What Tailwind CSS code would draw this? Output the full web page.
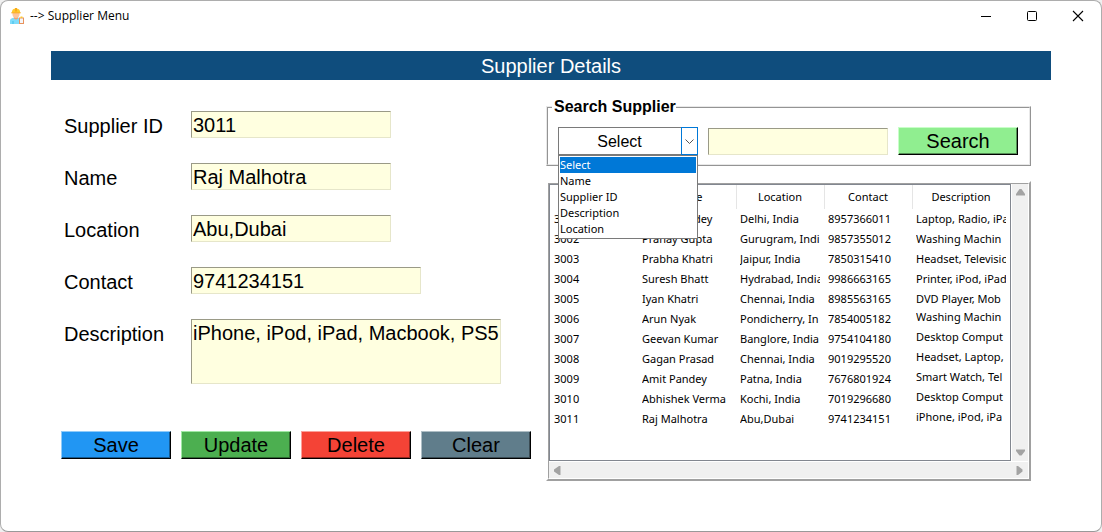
<!DOCTYPE html>
<html lang="en">
<head>
<meta charset="utf-8">
<meta name="viewport" content="width=device-width, initial-scale=1">
<title>Supplier Menu</title>
<script src="https://cdn.jsdelivr.net/npm/@tailwindcss/browser@4"></script>
</head>
<body class="bg-[#f0f0f0] text-black font-['Liberation_Sans',Arial,sans-serif]">
<div class="min-h-screen flex flex-col bg-white border border-[#adadad] border-b-[#999] rounded-lg">
  <header class="flex items-center h-[30px] pl-2">
    <svg class="size-4 shrink-0" viewBox="0 0 16 16" aria-hidden="true">
      <path d="M1 16v-3.500q0-2 2-2.300l2-.7h4l2 .7q1.500.3 1.500 2.300v3.500z" fill="#7fdcfb"/>
      <path d="M3.500 13h1v3h-1z" fill="#45bde8"/>
      <path d="M5 8h4v2.500q-2 2-4 0z" fill="#f0a070"/>
      <path d="M3.500 4.500h7v2.500q-.6 3-3.500 3t-3.500-3z" fill="#fcc59a"/>
      <path d="M2.800 4.800q0-4.300 4.200-4.300t4.200 4.300z" fill="#fdc92e"/>
      <path d="M6 0h2v3.500h-2z" fill="#f9a91c"/>
      <path d="M2.300 4.300h9.400v1h-9.400z" fill="#f9a91c"/>
      <path d="M10 9.500h5v6.500h-5z" fill="#e8935e"/>
      <path d="M11 10.500h3v4.500h-3z" fill="#f3f6fa"/>
      <path d="M11.500 8.500h2v1.500h-2z" fill="#fdc92e"/>
    </svg>
    <h1 class="grow ml-[5px] font-['Open_Sans',sans-serif] text-[12px] leading-4">--&gt; Supplier Menu</h1>
    <button type="button" aria-label="Minimize" class="w-[46px] h-full flex items-center justify-center">
      <svg class="size-3" viewBox="0 0 12 12" fill="none" stroke="#000"><path d="M1 6.500h10"/></svg>
    </button>
    <button type="button" aria-label="Maximize" class="w-[46px] h-full flex items-center justify-center">
      <svg class="size-3" viewBox="0 0 12 12" fill="none" stroke="#000"><rect x="1.500" y="1.500" width="9" height="9" rx="1"/></svg>
    </button>
    <button type="button" aria-label="Close" class="w-[46px] h-full flex items-center justify-center">
      <svg class="size-3" viewBox="0 0 12 12" fill="none" stroke="#000" stroke-width="1.100"><path d="M1 1l10 10M11 1L1 11"/></svg>
    </button>
  </header>

  <main class="px-[50px] pt-5 pb-12">
    <h2 class="h-[29px] bg-[#0f4d7d] text-white text-center text-[20px] leading-[30px]">Supplier Details</h2>
    <div class="flex items-start">
      <form class="w-[495px] shrink-0 pl-[10px] pt-[31px]">
        <div class="flex flex-col gap-[23px] pl-[3px] text-[20px]">
          <div class="flex items-start">
            <label for="sid" class="w-[127px] pt-[2px] leading-[27px]">Supplier ID</label>
            <input id="sid" value="3011" class="w-[200px] h-[27px] px-px bg-[#ffffe0] border border-t-[#9a9a87] border-l-[#9a9a87] border-b-[#e6e6ca] border-r-[#e6e6ca] outline-none">
          </div>
          <div class="flex items-start">
            <label for="name" class="w-[127px] pt-[2px] leading-[27px]">Name</label>
            <input id="name" value="Raj Malhotra" class="w-[200px] h-[27px] px-px bg-[#ffffe0] border border-t-[#9a9a87] border-l-[#9a9a87] border-b-[#e6e6ca] border-r-[#e6e6ca] outline-none">
          </div>
          <div class="flex items-start">
            <label for="loc" class="w-[127px] pt-[2px] leading-[27px]">Location</label>
            <input id="loc" value="Abu,Dubai" class="w-[200px] h-[27px] px-px bg-[#ffffe0] border border-t-[#9a9a87] border-l-[#9a9a87] border-b-[#e6e6ca] border-r-[#e6e6ca] outline-none">
          </div>
          <div class="flex items-start">
            <label for="contact" class="w-[127px] pt-[2px] leading-[27px]">Contact</label>
            <input id="contact" value="9741234151" class="w-[230px] h-[27px] px-px bg-[#ffffe0] border border-t-[#9a9a87] border-l-[#9a9a87] border-b-[#e6e6ca] border-r-[#e6e6ca] outline-none">
          </div>
          <div class="flex items-start">
            <label for="desc" class="w-[127px] pt-[2px] leading-[27px]">Description</label>
            <textarea id="desc" class="w-[310px] h-[65px] pl-px leading-[27px] resize-none overflow-hidden bg-[#ffffe0] border border-t-[#9a9a87] border-l-[#9a9a87] border-b-[#e6e6ca] border-r-[#e6e6ca] outline-none">iPhone, iPod, iPad, Macbook, PS5</textarea>
          </div>
        </div>
        <div class="flex gap-[10px] mt-[47px] text-[20px] leading-[26px]">
          <button type="button" class="w-[110px] h-[28px] bg-[#2196f3] border border-t-[#90cbf9] border-l-[#90cbf9] border-b-black border-r-black shadow-[inset_-1px_-1px_0_#145a92]">Save</button>
          <button type="button" class="w-[110px] h-[28px] bg-[#4caf50] border border-t-[#a0e8a4] border-l-[#a0e8a4] border-b-black border-r-black shadow-[inset_-1px_-1px_0_#2e6930]">Update</button>
          <button type="button" class="w-[110px] h-[28px] bg-[#f44336] border border-t-[#faa19b] border-l-[#faa19b] border-b-black border-r-black shadow-[inset_-1px_-1px_0_#922820]">Delete</button>
          <button type="button" class="w-[110px] h-[28px] bg-[#607d8b] border border-t-[#afbec5] border-l-[#afbec5] border-b-black border-r-black shadow-[inset_-1px_-1px_0_#3a4b53]">Clear</button>
        </div>
      </form>

      <section class="grow min-w-0 pt-[18px] pr-5">
        <fieldset class="min-w-0 border-2 [border-style:ridge] border-[#e8e8e8] px-1 pb-[9px]">
          <legend class="pl-[2px] text-[16px] leading-[18px] font-bold">Search Supplier</legend>
          <div class="flex items-center gap-[10px] pt-[11px] pl-[6px] pr-[7px]">
            <div class="relative w-[140px] shrink-0">
              <select aria-label="Search by" class="block appearance-none w-full h-[28px] pt-px pr-[17px] bg-white border border-[#7a7a7a] text-[16px] text-center outline-none">
                <option>Select</option>
                <option>Name</option>
                <option>Supplier ID</option>
                <option>Description</option>
                <option>Location</option>
              </select>
              <span class="absolute right-0 inset-y-0 w-[17px] flex items-center justify-center bg-white border border-[#0078d7] pointer-events-none">
                <svg class="w-[9px] h-[9px]" viewBox="0 0 9 9" fill="none" stroke="#555"><path d="M.5 2.500l4 4 4-4"/></svg>
              </span>
              <ul role="listbox" aria-label="Search options" class="absolute z-10 top-full inset-x-0 p-px bg-white border border-[#7a7a7a] font-['Noto_Sans',sans-serif] text-[11px] leading-4">
                <li role="option" aria-selected="true" class="bg-[#0078d7] text-white">Select</li>
                <li role="option">Name</li>
                <li role="option">Supplier ID</li>
                <li role="option">Description</li>
                <li role="option">Location</li>
              </ul>
            </div>
            <input aria-label="Search text" class="grow w-0 min-w-0 h-[27px] px-px text-[20px] bg-[#ffffe0] border border-t-[#9a9a87] border-l-[#9a9a87] border-b-[#e6e6ca] border-r-[#e6e6ca] outline-none">
            <button type="button" class="w-[120px] shrink-0 h-[28px] text-[20px] leading-[26px] bg-[#90ee90] border border-t-[#c8ffc8] border-l-[#c8ffc8] border-b-black border-r-black shadow-[inset_-1px_-1px_0_#568f56]">Search</button>
          </div>
        </fieldset>

        <div class="mt-[15px] border-2 border-t-white border-l-white border-b-[#a0a0a0] border-r-[#a0a0a0]">
        <div class="border border-t-[#a0a0a0] border-l-[#a0a0a0] border-b-white border-r-white grid grid-cols-[1fr_17px] grid-rows-[auto_17px] bg-[#f0f0f0]">
          <div class="min-w-0 h-[277px] overflow-hidden bg-white border border-[#828790]">
            <table class="w-full table-fixed border-collapse font-['Noto_Sans',sans-serif] text-[11px] leading-5 whitespace-nowrap">
              <colgroup><col class="w-[88px]"><col class="w-[98px]"><col class="w-[88px]"><col class="w-[88px]"><col class="w-[98px]"></colgroup>
              <thead>
                <tr class="h-[24px] *:font-normal *:p-0 *:border-r *:border-[#e5e5e5]">
                  <th>Supplier ID</th><th>Name</th><th>Location</th><th>Contact</th><th>Description</th>
                </tr>
              </thead>
              <tbody class="[&_td]:h-5 [&_td]:p-0 [&_td]:px-1 [&_td]:align-top [&_div]:overflow-hidden">
                <tr><td><div>3001</div></td><td><div>Rahul Pandey</div></td><td><div>Delhi, India</div></td><td><div>8957366011</div></td><td><div>Laptop, Radio, iPad</div></td></tr>
                <tr><td><div>3002</div></td><td><div>Pranay Gupta</div></td><td><div>Gurugram, Indi</div></td><td><div>9857355012</div></td><td><div>Washing Machin</div></td></tr>
                <tr><td><div>3003</div></td><td><div>Prabha Khatri</div></td><td><div>Jaipur, India</div></td><td><div>7850315410</div></td><td><div>Headset, Television</div></td></tr>
                <tr><td><div>3004</div></td><td><div>Suresh Bhatt</div></td><td><div>Hydrabad, India</div></td><td><div>9986663165</div></td><td><div>Printer, iPod, iPad</div></td></tr>
                <tr><td><div>3005</div></td><td><div>Iyan Khatri</div></td><td><div>Chennai, India</div></td><td><div>8985563165</div></td><td><div>DVD Player, Mob</div></td></tr>
                <tr><td><div>3006</div></td><td><div>Arun Nyak</div></td><td><div>Pondicherry, In</div></td><td><div>7854005182</div></td><td class="leading-4"><div>Washing Machin</div></td></tr>
                <tr><td><div>3007</div></td><td><div>Geevan Kumar</div></td><td><div>Banglore, India</div></td><td><div>9754104180</div></td><td class="leading-4"><div>Desktop Comput</div></td></tr>
                <tr><td><div>3008</div></td><td><div>Gagan Prasad</div></td><td><div>Chennai, India</div></td><td><div>9019295520</div></td><td class="leading-4"><div>Headset, Laptop,</div></td></tr>
                <tr><td><div>3009</div></td><td><div>Amit Pandey</div></td><td><div>Patna, India</div></td><td><div>7676801924</div></td><td class="leading-4"><div>Smart Watch, Tel</div></td></tr>
                <tr><td><div>3010</div></td><td><div>Abhishek Verma</div></td><td><div>Kochi, India</div></td><td><div>7019296680</div></td><td class="leading-4"><div>Desktop Comput</div></td></tr>
                <tr><td><div>3011</div></td><td><div>Raj Malhotra</div></td><td><div>Abu,Dubai</div></td><td><div>9741234151</div></td><td class="leading-4"><div>iPhone, iPod, iPa</div></td></tr>
              </tbody>
            </table>
          </div>
          <div class="flex flex-col justify-between items-center py-[5px] border-l border-white">
            <svg class="w-[9px] h-[7px]" viewBox="0 0 9 7" fill="#a3a3a3" aria-hidden="true"><path d="M3.500 0h2L9 5v1.500H0V5z"/></svg>
            <svg class="w-[9px] h-[7px]" viewBox="0 0 9 7" fill="#a3a3a3" aria-hidden="true"><path d="M0 .5h9V2L5.500 6.500h-2L0 2z"/></svg>
          </div>
          <div class="col-span-2 flex justify-between items-center px-[5px] border-t border-white">
            <svg class="w-[7px] h-[9px]" viewBox="0 0 7 9" fill="#a3a3a3" aria-hidden="true"><path d="M0 3.500v2L5 9h1.500V0H5z"/></svg>
            <svg class="w-[7px] h-[9px]" viewBox="0 0 7 9" fill="#a3a3a3" aria-hidden="true"><path d="M.5 0H2l4.500 3.500v2L2 9H.5z"/></svg>
          </div>
        </div>
        </div>
      </section>
    </div>
  </main>
</div>
</body>
</html>
